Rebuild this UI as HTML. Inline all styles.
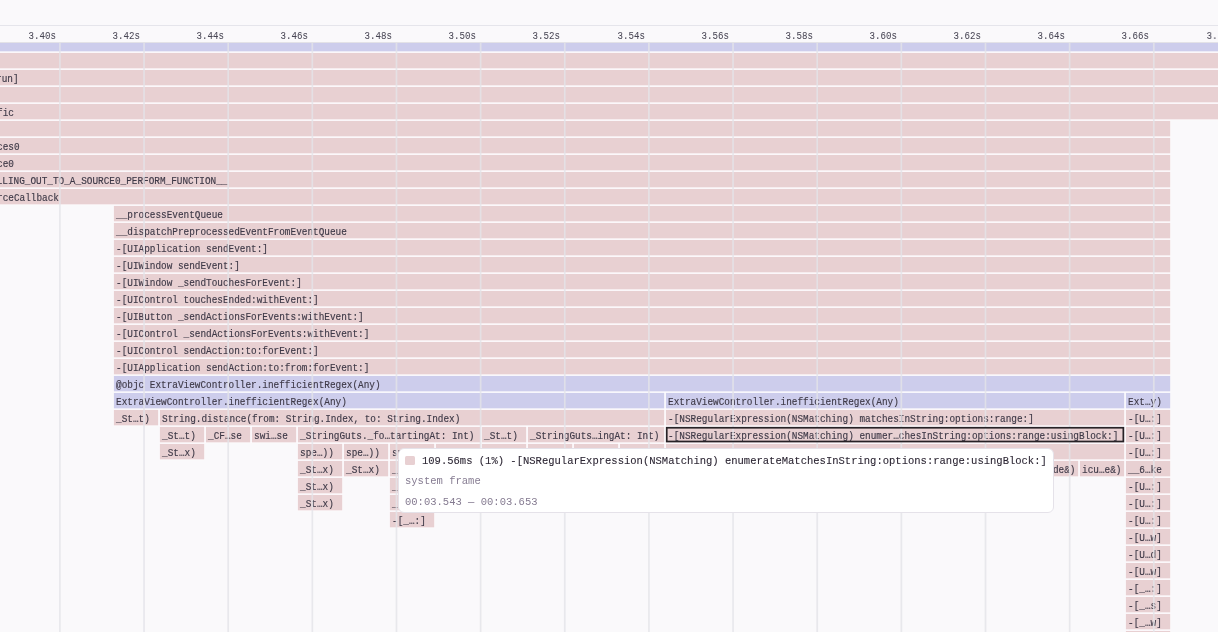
<!DOCTYPE html>
<html><head><meta charset="utf-8"><style>
html,body{margin:0;padding:0;}
body{width:1218px;height:632px;overflow:hidden;background:#faf9fb;position:relative;font-family:"Liberation Mono",monospace;}
.top{position:absolute;left:0;top:0;width:1218px;height:25px;background:#faf9fb;}
.hl{position:absolute;left:0;top:25px;width:1218px;height:1px;background:#e5e5eb;}
.hl2{position:absolute;left:0;top:41.7px;width:1218px;height:1px;background:#e3e2e7;}
.flame{position:absolute;left:0;top:42.6px;width:1218px;height:590px;overflow:hidden;}
.fi{position:absolute;left:0;top:-42.6px;width:1218px;height:632px;}
.wrap{position:absolute;left:0;top:0;width:1218px;height:632px;will-change:transform;}
.sv{position:absolute;left:0;top:0;}
.t{position:absolute;height:0;white-space:pre;font-size:10.0px;line-height:0;color:#3e3947;-webkit-text-stroke:0.15px #3e3947;transform:scaleX(0.938);transform-origin:0 0;}
.t::before{content:"";}
.rl{position:absolute;top:36.1px;width:300px;text-align:right;height:0;line-height:0;font-size:10.8px;color:#4a4856;-webkit-text-stroke:0.05px #4a4856;transform:scaleX(0.845);transform-origin:100% 0;white-space:pre;}
.tip{position:absolute;left:397.8px;top:448.3px;width:656.3px;height:65.2px;box-sizing:border-box;background:#fff;border:1.5px solid #e5e2e9;border-radius:6px;}
.sw{position:absolute;left:405.1px;top:455.5px;width:10px;height:9.8px;background:#e8d0d2;border-radius:1.5px;}
.tt{position:absolute;height:0;line-height:0;white-space:pre;font-size:11.1px;transform:scaleX(0.948);transform-origin:0 0;}
</style></head><body>
<div class="wrap"><div class="hl"></div><div class="hl2"></div>
<div class="rl" style="left:-244.50px">3.40s</div><div class="rl" style="left:-160.36px">3.42s</div><div class="rl" style="left:-76.21px">3.44s</div><div class="rl" style="left:7.94px">3.46s</div><div class="rl" style="left:92.08px">3.48s</div><div class="rl" style="left:176.22px">3.50s</div><div class="rl" style="left:260.37px">3.52s</div><div class="rl" style="left:344.51px">3.54s</div><div class="rl" style="left:428.66px">3.56s</div><div class="rl" style="left:512.80px">3.58s</div><div class="rl" style="left:596.95px">3.60s</div><div class="rl" style="left:681.09px">3.62s</div><div class="rl" style="left:765.24px">3.64s</div><div class="rl" style="left:849.38px">3.66s</div><div class="rl" style="left:933.53px">3.68s</div>
<div class="flame"><div class="fi">
<svg class="sv" width="1218" height="632" viewBox="0 0 1218 632">
<rect x="-10.00" y="41.80" width="1240.00" height="10.35" fill="#fdfcfe"/>
<rect x="-10.00" y="52.10" width="1240.00" height="17.05" fill="#fdfcfe"/>
<rect x="-10.00" y="69.10" width="1240.00" height="17.05" fill="#fdfcfe"/>
<rect x="-10.00" y="86.10" width="1240.00" height="17.05" fill="#fdfcfe"/>
<rect x="-10.00" y="103.10" width="1240.00" height="17.05" fill="#fdfcfe"/>
<rect x="-10.00" y="120.10" width="1180.20" height="17.05" fill="#fdfcfe"/>
<rect x="-10.00" y="137.10" width="1180.20" height="17.05" fill="#fdfcfe"/>
<rect x="-10.00" y="154.10" width="1180.20" height="17.05" fill="#fdfcfe"/>
<rect x="-10.00" y="171.10" width="1180.20" height="17.05" fill="#fdfcfe"/>
<rect x="-10.00" y="188.10" width="1180.20" height="17.05" fill="#fdfcfe"/>
<rect x="113.90" y="205.10" width="1056.30" height="17.05" fill="#fdfcfe"/>
<rect x="113.90" y="222.10" width="1056.30" height="17.05" fill="#fdfcfe"/>
<rect x="113.90" y="239.10" width="1056.30" height="17.05" fill="#fdfcfe"/>
<rect x="113.90" y="256.10" width="1056.30" height="17.05" fill="#fdfcfe"/>
<rect x="113.90" y="273.10" width="1056.30" height="17.05" fill="#fdfcfe"/>
<rect x="113.90" y="290.10" width="1056.30" height="17.05" fill="#fdfcfe"/>
<rect x="113.90" y="307.10" width="1056.30" height="17.05" fill="#fdfcfe"/>
<rect x="113.90" y="324.10" width="1056.30" height="17.05" fill="#fdfcfe"/>
<rect x="113.90" y="341.10" width="1056.30" height="17.05" fill="#fdfcfe"/>
<rect x="113.90" y="358.10" width="1056.30" height="17.05" fill="#fdfcfe"/>
<rect x="113.90" y="375.10" width="1056.30" height="17.05" fill="#fdfcfe"/>
<rect x="113.90" y="392.10" width="550.30" height="17.05" fill="#fdfcfe"/>
<rect x="665.90" y="392.10" width="458.30" height="17.05" fill="#fdfcfe"/>
<rect x="1125.90" y="392.10" width="44.30" height="17.05" fill="#fdfcfe"/>
<rect x="113.90" y="409.10" width="44.30" height="17.05" fill="#fdfcfe"/>
<rect x="159.90" y="409.10" width="504.30" height="17.05" fill="#fdfcfe"/>
<rect x="665.90" y="409.10" width="458.30" height="17.05" fill="#fdfcfe"/>
<rect x="1125.90" y="409.10" width="44.30" height="17.05" fill="#fdfcfe"/>
<rect x="159.90" y="426.10" width="44.30" height="17.05" fill="#fdfcfe"/>
<rect x="205.90" y="426.10" width="44.30" height="17.05" fill="#fdfcfe"/>
<rect x="251.90" y="426.10" width="44.30" height="17.05" fill="#fdfcfe"/>
<rect x="297.90" y="426.10" width="182.30" height="17.05" fill="#fdfcfe"/>
<rect x="481.90" y="426.10" width="44.30" height="17.05" fill="#fdfcfe"/>
<rect x="527.90" y="426.10" width="136.30" height="17.05" fill="#fdfcfe"/>
<rect x="665.90" y="426.10" width="458.30" height="17.05" fill="#fdfcfe"/>
<rect x="1125.90" y="426.10" width="44.30" height="17.05" fill="#fdfcfe"/>
<rect x="159.90" y="443.10" width="44.30" height="17.05" fill="#fdfcfe"/>
<rect x="297.90" y="443.10" width="44.30" height="17.05" fill="#fdfcfe"/>
<rect x="343.90" y="443.10" width="44.30" height="17.05" fill="#fdfcfe"/>
<rect x="389.90" y="443.10" width="44.30" height="17.05" fill="#fdfcfe"/>
<rect x="435.90" y="443.10" width="44.30" height="17.05" fill="#fdfcfe"/>
<rect x="481.90" y="443.10" width="44.30" height="17.05" fill="#fdfcfe"/>
<rect x="527.90" y="443.10" width="44.30" height="17.05" fill="#fdfcfe"/>
<rect x="573.90" y="443.10" width="44.30" height="17.05" fill="#fdfcfe"/>
<rect x="619.90" y="443.10" width="44.30" height="17.05" fill="#fdfcfe"/>
<rect x="665.90" y="443.10" width="458.30" height="17.05" fill="#fdfcfe"/>
<rect x="1125.90" y="443.10" width="44.30" height="17.05" fill="#fdfcfe"/>
<rect x="297.90" y="460.10" width="44.30" height="17.05" fill="#fdfcfe"/>
<rect x="343.90" y="460.10" width="44.30" height="17.05" fill="#fdfcfe"/>
<rect x="389.90" y="460.10" width="44.30" height="17.05" fill="#fdfcfe"/>
<rect x="1033.90" y="460.10" width="44.30" height="17.05" fill="#fdfcfe"/>
<rect x="1079.90" y="460.10" width="44.30" height="17.05" fill="#fdfcfe"/>
<rect x="1125.90" y="460.10" width="44.30" height="17.05" fill="#fdfcfe"/>
<rect x="297.90" y="477.10" width="44.30" height="17.05" fill="#fdfcfe"/>
<rect x="389.90" y="477.10" width="44.30" height="17.05" fill="#fdfcfe"/>
<rect x="1125.90" y="477.10" width="44.30" height="17.05" fill="#fdfcfe"/>
<rect x="297.90" y="494.10" width="44.30" height="17.05" fill="#fdfcfe"/>
<rect x="389.90" y="494.10" width="44.30" height="17.05" fill="#fdfcfe"/>
<rect x="1125.90" y="494.10" width="44.30" height="17.05" fill="#fdfcfe"/>
<rect x="389.90" y="511.10" width="44.30" height="17.05" fill="#fdfcfe"/>
<rect x="1125.90" y="511.10" width="44.30" height="17.05" fill="#fdfcfe"/>
<rect x="1125.90" y="528.10" width="44.30" height="17.05" fill="#fdfcfe"/>
<rect x="1125.90" y="545.10" width="44.30" height="17.05" fill="#fdfcfe"/>
<rect x="1125.90" y="562.10" width="44.30" height="17.05" fill="#fdfcfe"/>
<rect x="1125.90" y="579.10" width="44.30" height="17.05" fill="#fdfcfe"/>
<rect x="1125.90" y="596.10" width="44.30" height="17.05" fill="#fdfcfe"/>
<rect x="1125.90" y="613.10" width="44.30" height="17.05" fill="#fdfcfe"/>
<rect x="1125.90" y="630.10" width="44.30" height="17.05" fill="#fdfcfe"/>
<rect x="664.20" y="392.10" width="1.70" height="17.05" fill="#fdfcfe"/>
<rect x="1124.20" y="392.10" width="1.70" height="17.05" fill="#fdfcfe"/>
<rect x="158.20" y="409.10" width="1.70" height="17.05" fill="#fdfcfe"/>
<rect x="664.20" y="409.10" width="1.70" height="17.05" fill="#fdfcfe"/>
<rect x="1124.20" y="409.10" width="1.70" height="17.05" fill="#fdfcfe"/>
<rect x="204.20" y="426.10" width="1.70" height="17.05" fill="#fdfcfe"/>
<rect x="250.20" y="426.10" width="1.70" height="17.05" fill="#fdfcfe"/>
<rect x="296.20" y="426.10" width="1.70" height="17.05" fill="#fdfcfe"/>
<rect x="480.20" y="426.10" width="1.70" height="17.05" fill="#fdfcfe"/>
<rect x="526.20" y="426.10" width="1.70" height="17.05" fill="#fdfcfe"/>
<rect x="664.20" y="426.10" width="1.70" height="17.05" fill="#fdfcfe"/>
<rect x="1124.20" y="426.10" width="1.70" height="17.05" fill="#fdfcfe"/>
<rect x="342.20" y="443.10" width="1.70" height="17.05" fill="#fdfcfe"/>
<rect x="388.20" y="443.10" width="1.70" height="17.05" fill="#fdfcfe"/>
<rect x="434.20" y="443.10" width="1.70" height="17.05" fill="#fdfcfe"/>
<rect x="480.20" y="443.10" width="1.70" height="17.05" fill="#fdfcfe"/>
<rect x="526.20" y="443.10" width="1.70" height="17.05" fill="#fdfcfe"/>
<rect x="572.20" y="443.10" width="1.70" height="17.05" fill="#fdfcfe"/>
<rect x="618.20" y="443.10" width="1.70" height="17.05" fill="#fdfcfe"/>
<rect x="664.20" y="443.10" width="1.70" height="17.05" fill="#fdfcfe"/>
<rect x="1124.20" y="443.10" width="1.70" height="17.05" fill="#fdfcfe"/>
<rect x="342.20" y="460.10" width="1.70" height="17.05" fill="#fdfcfe"/>
<rect x="388.20" y="460.10" width="1.70" height="17.05" fill="#fdfcfe"/>
<rect x="1078.20" y="460.10" width="1.70" height="17.05" fill="#fdfcfe"/>
<rect x="1124.20" y="460.10" width="1.70" height="17.05" fill="#fdfcfe"/>
<rect x="-10.00" y="42.60" width="1240.00" height="8.75" fill="#cdcdec"/>
<rect x="-10.00" y="52.90" width="1240.00" height="15.45" fill="#e8d0d2"/>
<rect x="-10.00" y="69.90" width="1240.00" height="15.45" fill="#e8d0d2"/>
<rect x="-10.00" y="86.90" width="1240.00" height="15.45" fill="#e8d0d2"/>
<rect x="-10.00" y="103.90" width="1240.00" height="15.45" fill="#e8d0d2"/>
<rect x="-10.00" y="120.90" width="1180.20" height="15.45" fill="#e8d0d2"/>
<rect x="-10.00" y="137.90" width="1180.20" height="15.45" fill="#e8d0d2"/>
<rect x="-10.00" y="154.90" width="1180.20" height="15.45" fill="#e8d0d2"/>
<rect x="-10.00" y="171.90" width="1180.20" height="15.45" fill="#e8d0d2"/>
<rect x="-10.00" y="188.90" width="1180.20" height="15.45" fill="#e8d0d2"/>
<rect x="113.90" y="205.90" width="1056.30" height="15.45" fill="#e8d0d2"/>
<rect x="113.90" y="222.90" width="1056.30" height="15.45" fill="#e8d0d2"/>
<rect x="113.90" y="239.90" width="1056.30" height="15.45" fill="#e8d0d2"/>
<rect x="113.90" y="256.90" width="1056.30" height="15.45" fill="#e8d0d2"/>
<rect x="113.90" y="273.90" width="1056.30" height="15.45" fill="#e8d0d2"/>
<rect x="113.90" y="290.90" width="1056.30" height="15.45" fill="#e8d0d2"/>
<rect x="113.90" y="307.90" width="1056.30" height="15.45" fill="#e8d0d2"/>
<rect x="113.90" y="324.90" width="1056.30" height="15.45" fill="#e8d0d2"/>
<rect x="113.90" y="341.90" width="1056.30" height="15.45" fill="#e8d0d2"/>
<rect x="113.90" y="358.90" width="1056.30" height="15.45" fill="#e8d0d2"/>
<rect x="113.90" y="375.90" width="1056.30" height="15.45" fill="#cdcdec"/>
<rect x="113.90" y="392.90" width="550.30" height="15.45" fill="#cdcdec"/>
<rect x="665.90" y="392.90" width="458.30" height="15.45" fill="#cdcdec"/>
<rect x="1125.90" y="392.90" width="44.30" height="15.45" fill="#cdcdec"/>
<rect x="113.90" y="409.90" width="44.30" height="15.45" fill="#e8d0d2"/>
<rect x="159.90" y="409.90" width="504.30" height="15.45" fill="#e8d0d2"/>
<rect x="665.90" y="409.90" width="458.30" height="15.45" fill="#e8d0d2"/>
<rect x="1125.90" y="409.90" width="44.30" height="15.45" fill="#e8d0d2"/>
<rect x="159.90" y="426.90" width="44.30" height="15.45" fill="#e8d0d2"/>
<rect x="205.90" y="426.90" width="44.30" height="15.45" fill="#e8d0d2"/>
<rect x="251.90" y="426.90" width="44.30" height="15.45" fill="#e8d0d2"/>
<rect x="297.90" y="426.90" width="182.30" height="15.45" fill="#e8d0d2"/>
<rect x="481.90" y="426.90" width="44.30" height="15.45" fill="#e8d0d2"/>
<rect x="527.90" y="426.90" width="136.30" height="15.45" fill="#e8d0d2"/>
<rect x="665.90" y="426.90" width="458.30" height="15.45" fill="#e8d0d2"/>
<rect x="1125.90" y="426.90" width="44.30" height="15.45" fill="#e8d0d2"/>
<rect x="159.90" y="443.90" width="44.30" height="15.45" fill="#e8d0d2"/>
<rect x="297.90" y="443.90" width="44.30" height="15.45" fill="#e8d0d2"/>
<rect x="343.90" y="443.90" width="44.30" height="15.45" fill="#e8d0d2"/>
<rect x="389.90" y="443.90" width="44.30" height="15.45" fill="#e8d0d2"/>
<rect x="435.90" y="443.90" width="44.30" height="15.45" fill="#e8d0d2"/>
<rect x="481.90" y="443.90" width="44.30" height="15.45" fill="#e8d0d2"/>
<rect x="527.90" y="443.90" width="44.30" height="15.45" fill="#e8d0d2"/>
<rect x="573.90" y="443.90" width="44.30" height="15.45" fill="#e8d0d2"/>
<rect x="619.90" y="443.90" width="44.30" height="15.45" fill="#e8d0d2"/>
<rect x="665.90" y="443.90" width="458.30" height="15.45" fill="#e8d0d2"/>
<rect x="1125.90" y="443.90" width="44.30" height="15.45" fill="#e8d0d2"/>
<rect x="297.90" y="460.90" width="44.30" height="15.45" fill="#e8d0d2"/>
<rect x="343.90" y="460.90" width="44.30" height="15.45" fill="#e8d0d2"/>
<rect x="389.90" y="460.90" width="44.30" height="15.45" fill="#e8d0d2"/>
<rect x="1033.90" y="460.90" width="44.30" height="15.45" fill="#e8d0d2"/>
<rect x="1079.90" y="460.90" width="44.30" height="15.45" fill="#e8d0d2"/>
<rect x="1125.90" y="460.90" width="44.30" height="15.45" fill="#e8d0d2"/>
<rect x="297.90" y="477.90" width="44.30" height="15.45" fill="#e8d0d2"/>
<rect x="389.90" y="477.90" width="44.30" height="15.45" fill="#e8d0d2"/>
<rect x="1125.90" y="477.90" width="44.30" height="15.45" fill="#e8d0d2"/>
<rect x="297.90" y="494.90" width="44.30" height="15.45" fill="#e8d0d2"/>
<rect x="389.90" y="494.90" width="44.30" height="15.45" fill="#e8d0d2"/>
<rect x="1125.90" y="494.90" width="44.30" height="15.45" fill="#e8d0d2"/>
<rect x="389.90" y="511.90" width="44.30" height="15.45" fill="#e8d0d2"/>
<rect x="1125.90" y="511.90" width="44.30" height="15.45" fill="#e8d0d2"/>
<rect x="1125.90" y="528.90" width="44.30" height="15.45" fill="#e8d0d2"/>
<rect x="1125.90" y="545.90" width="44.30" height="15.45" fill="#e8d0d2"/>
<rect x="1125.90" y="562.90" width="44.30" height="15.45" fill="#e8d0d2"/>
<rect x="1125.90" y="579.90" width="44.30" height="15.45" fill="#e8d0d2"/>
<rect x="1125.90" y="596.90" width="44.30" height="15.45" fill="#e8d0d2"/>
<rect x="1125.90" y="613.90" width="44.30" height="15.45" fill="#e8d0d2"/>
<rect x="1125.90" y="630.90" width="44.30" height="15.45" fill="#e8d0d2"/>
</svg>
<div class="t" style="left:-3.91px;top:80.10px">run]</div>
<div class="t" style="left:-3.28px;top:114.10px">fic</div>
<div class="t" style="left:-3.51px;top:148.10px">ces0</div>
<div class="t" style="left:-3.48px;top:165.10px">ce0</div>
<div class="t" style="left:-99.42px;top:182.10px">__CFRUNLOOP_IS_CALLING_OUT_TO_A_SOURCE0_PERFORM_FUNCTION__</div>
<div class="t" style="left:-3.51px;top:199.10px">rceCallback</div>
<div class="t" style="left:116.00px;top:216.10px">__processEventQueue</div>
<div class="t" style="left:116.00px;top:233.10px">__dispatchPreprocessedEventFromEventQueue</div>
<div class="t" style="left:116.00px;top:250.10px">-[UIApplication sendEvent:]</div>
<div class="t" style="left:116.00px;top:267.10px">-[UIWindow sendEvent:]</div>
<div class="t" style="left:116.00px;top:284.10px">-[UIWindow _sendTouchesForEvent:]</div>
<div class="t" style="left:116.00px;top:301.10px">-[UIControl touchesEnded:withEvent:]</div>
<div class="t" style="left:116.00px;top:318.10px">-[UIButton _sendActionsForEvents:withEvent:]</div>
<div class="t" style="left:116.00px;top:335.10px">-[UIControl _sendActionsForEvents:withEvent:]</div>
<div class="t" style="left:116.00px;top:352.10px">-[UIControl sendAction:to:forEvent:]</div>
<div class="t" style="left:116.00px;top:369.10px">-[UIApplication sendAction:to:from:forEvent:]</div>
<div class="t" style="left:116.00px;top:386.10px">@objc ExtraViewController.inefficientRegex(Any)</div>
<div class="t" style="left:116.00px;top:403.10px">ExtraViewController.inefficientRegex(Any)</div>
<div class="t" style="left:668.00px;top:403.10px">ExtraViewController.inefficientRegex(Any)</div>
<div class="t" style="left:1128.00px;top:403.10px">Ext…y)</div>
<div class="t" style="left:116.00px;top:420.10px">_St…t)</div>
<div class="t" style="left:162.00px;top:420.10px">String.distance(from: String.Index, to: String.Index)</div>
<div class="t" style="left:668.00px;top:420.10px">-[NSRegularExpression(NSMatching) matchesInString:options:range:]</div>
<div class="t" style="left:1128.00px;top:420.10px">-[U…:]</div>
<div class="t" style="left:162.00px;top:437.10px">_St…t)</div>
<div class="t" style="left:208.00px;top:437.10px">_CF…se</div>
<div class="t" style="left:254.00px;top:437.10px">swi…se</div>
<div class="t" style="left:300.00px;top:437.10px">_StringGuts._fo…tartingAt: Int)</div>
<div class="t" style="left:484.00px;top:437.10px">_St…t)</div>
<div class="t" style="left:530.00px;top:437.10px">_StringGuts…ingAt: Int)</div>
<div class="t" style="left:668.00px;top:437.10px">-[NSRegularExpression(NSMatching) enumer…chesInString:options:range:usingBlock:]</div>
<div class="t" style="left:1128.00px;top:437.10px">-[U…:]</div>
<div class="t" style="left:162.00px;top:454.10px">_St…x)</div>
<div class="t" style="left:300.00px;top:454.10px">spe…))</div>
<div class="t" style="left:346.00px;top:454.10px">spe…))</div>
<div class="t" style="left:392.00px;top:454.10px">spe…))</div>
<div class="t" style="left:438.00px;top:454.10px">spe…))</div>
<div class="t" style="left:484.00px;top:454.10px">spe…))</div>
<div class="t" style="left:530.00px;top:454.10px">spe…))</div>
<div class="t" style="left:576.00px;top:454.10px">spe…))</div>
<div class="t" style="left:622.00px;top:454.10px">spe…))</div>
<div class="t" style="left:1128.00px;top:454.10px">-[U…:]</div>
<div class="t" style="left:300.00px;top:471.10px">_St…x)</div>
<div class="t" style="left:346.00px;top:471.10px">_St…x)</div>
<div class="t" style="left:392.00px;top:471.10px">_St…x)</div>
<div class="t" style="left:1036.00px;top:471.10px">ic de&amp;)</div>
<div class="t" style="left:1082.00px;top:471.10px">icu…e&amp;)</div>
<div class="t" style="left:1128.00px;top:471.10px">__6…ke</div>
<div class="t" style="left:300.00px;top:488.10px">_St…x)</div>
<div class="t" style="left:392.00px;top:488.10px">_St…x)</div>
<div class="t" style="left:1128.00px;top:488.10px">-[U…:]</div>
<div class="t" style="left:300.00px;top:505.10px">_St…x)</div>
<div class="t" style="left:392.00px;top:505.10px">_St…x)</div>
<div class="t" style="left:1128.00px;top:505.10px">-[U…:]</div>
<div class="t" style="left:392.00px;top:522.10px">-[_…:]</div>
<div class="t" style="left:1128.00px;top:522.10px">-[U…:]</div>
<div class="t" style="left:1128.00px;top:539.10px">-[U…w]</div>
<div class="t" style="left:1128.00px;top:556.10px">-[U…d]</div>
<div class="t" style="left:1128.00px;top:573.10px">-[U…w]</div>
<div class="t" style="left:1128.00px;top:590.10px">-[_…:]</div>
<div class="t" style="left:1128.00px;top:607.10px">-[_…s]</div>
<div class="t" style="left:1128.00px;top:624.10px">-[_…w]</div>
<div class="t" style="left:1128.00px;top:641.10px">-[_…:]</div>
<svg class="sv" width="1218" height="632" viewBox="0 0 1218 632">
<rect x="59.05" y="42.6" width="1.70" height="600" fill="rgba(228,228,233,0.8)"/><rect x="143.19" y="42.6" width="1.70" height="600" fill="rgba(228,228,233,0.8)"/><rect x="227.34" y="42.6" width="1.70" height="600" fill="rgba(228,228,233,0.8)"/><rect x="311.48" y="42.6" width="1.70" height="600" fill="rgba(228,228,233,0.8)"/><rect x="395.63" y="42.6" width="1.70" height="600" fill="rgba(228,228,233,0.8)"/><rect x="479.77" y="42.6" width="1.70" height="600" fill="rgba(228,228,233,0.8)"/><rect x="563.92" y="42.6" width="1.70" height="600" fill="rgba(228,228,233,0.8)"/><rect x="648.06" y="42.6" width="1.70" height="600" fill="rgba(228,228,233,0.8)"/><rect x="732.21" y="42.6" width="1.70" height="600" fill="rgba(228,228,233,0.8)"/><rect x="816.35" y="42.6" width="1.70" height="600" fill="rgba(228,228,233,0.8)"/><rect x="900.50" y="42.6" width="1.70" height="600" fill="rgba(228,228,233,0.8)"/><rect x="984.64" y="42.6" width="1.70" height="600" fill="rgba(228,228,233,0.8)"/><rect x="1068.79" y="42.6" width="1.70" height="600" fill="rgba(228,228,233,0.8)"/><rect x="1152.94" y="42.6" width="1.70" height="600" fill="rgba(228,228,233,0.8)"/><rect x="1237.08" y="42.6" width="1.70" height="600" fill="rgba(228,228,233,0.8)"/>
<rect x="666.75" y="427.75" width="456.60" height="13.75" fill="none" stroke="#272226" stroke-width="1.7"/>
</svg>
</div></div>
<div class="tip"></div>
<div class="sw"></div>
<div class="tt" style="left:421.8px;top:461.45px;color:#2d2734;-webkit-text-stroke:0.1px #2d2734">109.56ms (1%) -[NSRegularExpression(NSMatching) enumerateMatchesInString:options:range:usingBlock:]</div>
<div class="tt" style="left:405.2px;top:481.45px;color:#867c92">system frame</div>
<div class="tt" style="left:405.2px;top:501.75px;color:#847a90">00:03.543 — 00:03.653</div>
</div></body></html>
